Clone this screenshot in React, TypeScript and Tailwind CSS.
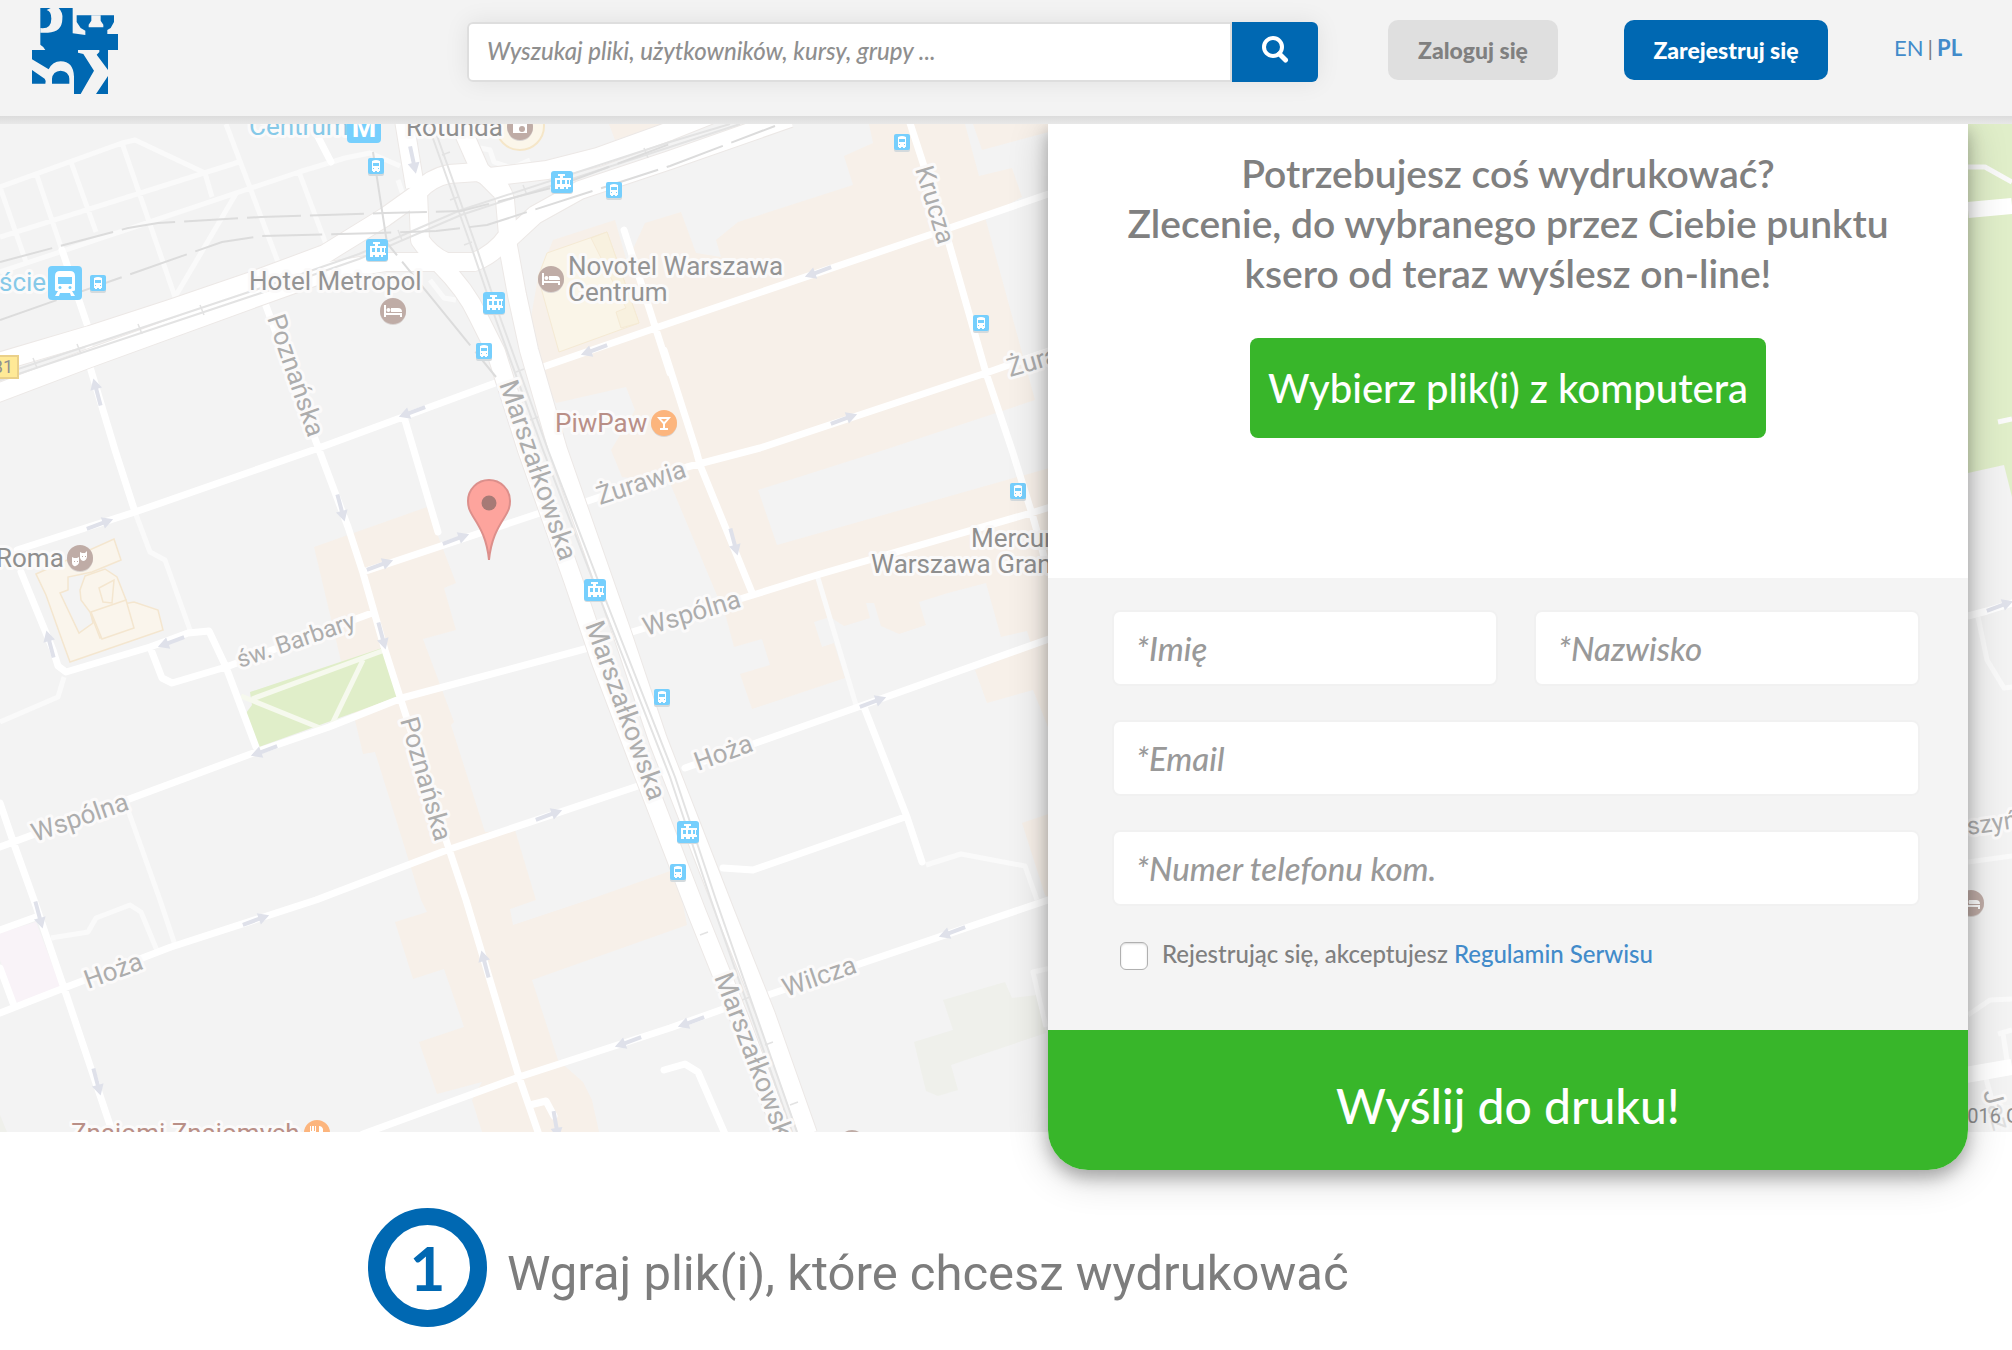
import type { ReactNode } from "react";

const MINOR_ROADS = [
  "M17 550 135 512 316 449 498 382",
  "M540 368 670 323 935 233 1060 190",
  "M363 572 543 512M585 502 687 467 760 448 986 373 1060 347",
  "M265 303 318 447 348 527 363 573 385 650 400 697 447 843 466 900 519 1077 538 1132",
  "M404 417 438 532",
  "M62 250 88 327 90 367 115 450 135 512",
  "M21 572 53 650 58 666 66 672 150 647 188 633 209 631 226 667 256 747",
  "M150 647 162 678 172 683 226 667 372 613",
  "M0 847 256 752 329 727 402 698 592 647M632 632 753 595 817 575 1031 513 1060 504",
  "M0 1013 64 988 171 947 316 900 447 850 641 785M685 768 858 707 1060 635",
  "M363 1134 519 1077 670 1028 726 1008M768 995 1060 896",
  "M0 803 15 847 34 900 64 988 113 1134",
  "M0 930 36 917M0 968 13 1003",
  "M909 120 948 240 986 373 1012 450 1033 517 1045 560",
  "M664 350 696 450 700 465 753 595",
  "M624 230 670 373",
  "M864 707 907 817 922 862M905 817 753 870 723 868",
  "M664 1070 685 1064 698 1072 725 1134",
  "M316 133 331 162",
  "M530 1105 546 1101 554 1116",
  "M1968 616 1987 611 2012 603",
];

const FAINT_ROADS = [
  "M0 187 122 143 135 140 205 173 212 197M0 237 239 162M0 272 299 172 345 158 370 153 400 166",
  "M0 187 26 262M36 173 62 250M71 162 96 232M122 143 175 297 237 192M226 124 278 262M299 172 327 247",
  "M135 512 150 552 165 560 190 630M64 677 58 697 0 722",
  "M128 810 160 900 175 945M51 938 88 932 96 918 130 905 141 912 158 953",
  "M926 865 961 854 1025 866 1037 900M1060 966 1033 972 1046 1027",
  "M817 575 856 705",
  "M398 180 402 192 410 196M480 148 490 150 494 162 512 168 530 160M430 280 444 298 456 300",
  "M1978 617 1987 660 2004 688 2012 687M1968 862 2012 856M1968 1015 1990 1000 2012 999",
  "M1968 167 1985 167 2012 182M1998 422 2012 419M1985 1075 1992 1100M1998 1034 2012 1030M2003 1034 2007 1060",
];

const COMMERCIAL = [
  "M869 124 965 124 979 176 1012 168 1022 197 985 217 1035 400 884 450 758 490 777 545 1060 465 1060 660 1033 650 1027 631 1001 637 986 583 948 593 919 602 926 625 899 634 881 626 874 603 866 603 870 618 844 626 830 617 814 622 822 647 834 643 845 678 752 709 740 674 770 665 762 639 734 647 726 617 670 483 622 477 611 450 635 410 626 387 556 403 538 367 528 335 538 277 553 240 615 220 627 262 645 223 681 212 696 253 721 257 716 240 738 222 853 185 844 156 873 143Z",
  "M975 670 1060 635 1060 740 1048 727 1033 690 987 703Z",
  "M1022 823 1060 810 1060 905 1045 895Z",
  "M973 124 1060 124 1060 129 982 150Z",
  "M609 124 665 124 615 140Z",
  "M314 547 427 507 456 583 444 588 456 630 423 639 454 722 451 725 485 832 515 830 536 900 510 909 513 925 588 900 676 869 687 925 532 980 558 1060 583 1082 592 1100 599 1132 482 1132 472 1100 482 1082 437 1094 419 1042 464 1027 444 969 413 979 395 922 427 912 421 900 375 752 363 754Z",
];

// x, y, heading in degrees
const ARROWS = [
  [413, 160, 78], [594, 350, 160], [412, 412, 160], [97, 392, -105], [818, 272, 160], [844, 419, -20],
  [100, 524, -20], [341, 508, 75], [380, 565, -20], [456, 539, -20], [171, 642, 160], [50, 644, -105],
  [382, 636, 75], [264, 751, 160], [549, 815, -20], [734, 542, 75], [873, 702, -20], [39, 915, 75],
  [256, 920, -20], [485, 964, -105], [628, 1042, 160], [97, 1082, 75], [556, 1125, 80], [952, 932, 160],
  [691, 1022, 160], [2000, 606, -20],
];

const BUS_STOPS = [
  [376, 166], [614, 190], [98, 283], [484, 351], [902, 142], [981, 323], [1018, 491], [662, 697], [678, 872],
];

const TRAM_STOPS = [[562, 182], [377, 250], [494, 303], [595, 590], [688, 832]];

const STREETS = [
  { name: "Krucza", x: 915, y: 169, angle: 73, size: 26 },
  { name: "Poznańska", x: 267, y: 318, angle: 71, size: 26 },
  { name: "Poznańska", x: 400, y: 720, angle: 74, size: 26 },
  { name: "Marszałkowska", x: 499, y: 384, angle: 71, size: 27 },
  { name: "Marszałkowska", x: 585, y: 625, angle: 70, size: 27 },
  { name: "Marszałkowska", x: 714, y: 977, angle: 69, size: 27 },
  { name: "Żurawia", x: 600, y: 505, angle: -18, size: 26 },
  { name: "Żurawia", x: 1010, y: 377, angle: -16, size: 26 },
  { name: "Wspólna", x: 646, y: 636, angle: -17, size: 26 },
  { name: "Wspólna", x: 35, y: 842, angle: -19, size: 26 },
  { name: "św. Barbary", x: 240, y: 668, angle: -19, size: 24 },
  { name: "Hoża", x: 698, y: 771, angle: -20, size: 26 },
  { name: "Hoża", x: 88, y: 989, angle: -20, size: 26 },
  { name: "Wilcza", x: 786, y: 997, angle: -19, size: 26 },
  { name: "szyń", x: 1968, y: 835, angle: -8, size: 25 },
  { name: "Jaz", x: 1983, y: 1092, angle: 75, size: 26 },
];

const PLACES = [
  { name: "Centrum", x: 249, y: 135, color: "#86c9e8" },
  { name: "Rotunda", x: 406, y: 136, color: "#8f8f8f" },
  { name: "Hotel Metropol", x: 249, y: 290, color: "#949494" },
  { name: "Novotel Warszawa", x: 568, y: 275, color: "#949494" },
  { name: "Centrum", x: 568, y: 301, color: "#949494" },
  { name: "PiwPaw", x: 555, y: 432, color: "#b98f87" },
  { name: "Roma", x: -4, y: 567, color: "#8f8f8f" },
  { name: "Mercur", x: 971, y: 547, color: "#8f8f8f" },
  { name: "Warszawa Gran", x: 871, y: 573, color: "#8f8f8f" },
  { name: "Znajomi Znajomych", x: 71, y: 1142, color: "#b98f87" },
  { name: "ście", x: -1, y: 291, color: "#86c9e8" },
];

function Poi({ x, y, color = "#bfaca6", children }: { x: number; y: number; color?: string; children?: ReactNode }) {
  return (
    <g transform={`translate(${x} ${y})`}>
      <circle cy="1" r="13" fill="#d9d4d2" />
      <circle r="13" fill={color} />
      {children}
    </g>
  );
}

function Bed() {
  return <path d="M-9-6h2v8H9V6H7V4H-7v2h-2zM-2-3H5q4 0 4 4H-2zM-4.500-3a2 2 0 1 1-.1 0z" fill="#fff" />;
}

function CityMap() {
  return (
    <svg
      className="absolute inset-0 size-full font-[Roboto,sans-serif]"
      viewBox="0 124 2012 1008"
      preserveAspectRatio="xMidYMid slice"
      role="img"
      aria-label="Mapa"
    >
      <rect y="124" width="2012" height="1008" fill="#f3f3f3" />
      <path d={COMMERCIAL.join("")} fill="#f7f0e9" />
      <path d="M547 253 607 232 639 323 559 352 538 277Z" fill="#faf5e8" stroke="#f5ead4" strokeWidth="1" />
      <path d="M591 238 607 232 639 323 621 328 616 312 626 308Z" fill="#f8f1df" stroke="#f5ead4" />
      <circle cx="520" cy="126" r="24" fill="#fbf6ea" stroke="#f5e6c8" strokeWidth="2" />
      <path d="M250 692 382 648 397 697 259 747 246 713 252 705Z" fill="#e0eec9" />
      <path d="M0 933 36 922 62 990 15 1003 0 960Z" fill="#f9f3f8" />
      <path
        d="M943 1000 1005 982 1012 998 1037 995 1046 1033 951 1065 958 1090 938 1096 926 1091 914 1042 953 1030Z"
        fill="#eff0eb"
      />
      <path d="M0 1115 7 1132 0 1132Z" fill="#eff0eb" />
      <path d="M1968 124H2012V497L2004 465 1968 473Z" fill="#e0eec9" />

      {/* opera building */}
      <g fill="#faf5ec" stroke="#f4e6cf" strokeWidth="1.500">
        <path d="M36 574 114 539 121 560 92 572 68 577 68 590 60 593 79 633 93 623 90 610 134 602 158 610 163 630 70 662 62 640 46 595Z" />
        <path d="M85 576 105 569 117 577 126 600 130 625 100 638 90 612 81 600 80 590Z" />
        <path d="M99 588 114 580 112 603 103 602ZM91 612 126 600 134 628 102 639Z" />
      </g>

      <g fill="none" stroke="#fafafa" strokeWidth="5" strokeLinejoin="round">
        <path d={FAINT_ROADS.join("")} />
        <path d="M252 699 382 651M241 696 320 728M363 660 332 724" stroke="#f6f9ee" />
      </g>
      <path d={MINOR_ROADS.join("")} fill="none" stroke="#fff" strokeWidth="7" strokeLinejoin="round" strokeLinecap="round" />
      <path d="M1968 210 2012 206M1960 1076 2012 1067" stroke="#fff" strokeWidth="16" />

      {/* avenues and the roundabout: casing first, then the white surface */}
      {["#ece8e6", "#fff"].map((color, i) => (
        <g key={color} fill="none" stroke={color} strokeWidth={i ? 18 : 20} strokeLinejoin="round">
          <path d="M-5 363 90 335 170 309 252 281 325 254 385 217 420 192" />
          <path d="M-5 394 90 358 263 295 330 271 385 262 440 262" />
          <path d="M404 120 415 187M458 120 480 170 500 190" />
          <path d="M490 177 547 170 598 157 670 131 710 115M508 240 535 215 580 190 670 160 790 118" />
          <path d="M418 192Q430 178 449 174L478 172Q500 180 505 200L508 235Q495 254 474 262L446 262Q430 255 420 240Z" />
          <path d="M440 264Q466 290 478 316L496 352 527 450 573 580 601 662 640 765 697 913 740 1020 783 1134" />
          <path d="M506 235 517 295 529 350 558 450 622 633 658 740 725 912 766 1015 808 1134" />
        </g>
      ))}

      {/* tram tracks */}
      <g fill="none" stroke="#e3e3e3" strokeWidth="2">
        <path d="M0 375 261 288 359 254 461 210 670 142 730 124M0 380 261 293 359 259 461 215 670 147 740 124" />
        <path d="M430 130 470 243 496 320 543 450 594 583 670 777 711 900 792 1132M435 130 475 243 501 320 548 450 599 583 675 777 716 900 797 1132" />
        <path d="M33 358 37 368M77 344 81 354M138 324 142 334M200 305 204 315M398 230 402 240M523 185 527 195M644 148 648 158M442 155 450 152M450 200 458 197M464 245 472 242M516 372 524 369M530 420 538 417M700 935 708 932M742 1000 750 997M765 1045 773 1042M790 1105 798 1102" strokeWidth="1.500" />
      </g>
      <g fill="none" stroke="#dcdcdc" strokeWidth="2">
        <path d="M0 262 128 228 158 223 261 217 385 213 461 211 555 187 670 144" strokeDasharray="54 9" />
        <path d="M0 320 222 242 261 236 380 233 436 231 487 225 670 166 775 126" strokeDasharray="60 9" />
        <path d="M373 152 387 243 496 377" strokeDasharray="108 8" />
      </g>

      <g fill="#dfe1ea">
        {ARROWS.map(([x, y, angle]) => (
          <path key={`${x}-${y}`} d="M-14-2H3V-6L14 0 3 6V2H-14Z" transform={`translate(${x} ${y}) rotate(${angle})`} />
        ))}
      </g>

      <rect x="-12" y="356" width="30" height="22" fill="#ffe996" stroke="#ead08a" strokeWidth="2" />
      <text x="13" y="373" textAnchor="end" fontSize="18" fill="#8f8f8f">81</text>

      <g fontSize="26" stroke="#fbfafa" strokeWidth="6" strokeLinejoin="round" className="[paint-order:stroke]">
        {STREETS.map((s) => (
          <text
            key={`${s.x}-${s.y}`}
            fill="#adadad"
            fontSize={s.size}
            transform={`translate(${s.x} ${s.y}) rotate(${s.angle})`}
          >
            {s.name}
          </text>
        ))}
        {PLACES.map((p) => (
          <text key={`${p.x}-${p.y}`} x={p.x} y={p.y} fill={p.color}>
            {p.name}
          </text>
        ))}
      </g>
      <rect x="1900" y="1105" width="112" height="27" fill="#f5f5f5" fillOpacity="0.700" />
      <text x="1956" y="1123" fontSize="20" fill="#8f8f8f">2016 G</text>

      {BUS_STOPS.map(([x, y]) => (
        <g key={`${x}-${y}`} transform={`translate(${x} ${y})`}>
          <rect x="-8" y="-7" width="16" height="17" rx="2" fill="#d4dadd" />
          <rect x="-8" y="-8" width="16" height="16" rx="2" fill="#76cffd" />
          <path d="M-4-5q4-2 8 0V5H3V6H1V5h-2v1h-2V5h-1z" fill="#fff" />
          <path d="M-3-3h6v3h-6zM-3 2h1v1h-1zM2 2h1v1h-1z" fill="#76cffd" />
        </g>
      ))}
      {TRAM_STOPS.map(([x, y]) => (
        <g key={`${x}-${y}`} transform={`translate(${x} ${y})`}>
          <rect x="-11" y="-10" width="22" height="22" rx="3" fill="#d4dadd" />
          <rect x="-11" y="-11" width="22" height="22" rx="3" fill="#76cffd" />
          <path d="M-4-8h7v2H1v2h8v2H8v5h1v2H-4v2h-3V-4h5v-2h-2zM-2 5h4v2h-4zM4 5h2v2H4z" fill="#fff" />
          <path d="M-5-2h3v4h-3zM0-2h3v4H0zM5-2h2v4H5z" fill="#76cffd" />
        </g>
      ))}

      <g transform="translate(65 283)">
        <rect x="-17" y="-17" width="34" height="34" rx="4" fill="#76cffd" />
        <path d="M-5-12H5q5 0 5 5V7Q10 8 8 8H7l3 5H6L5 10H-5l-1 3h-4l3-5h-1q-2 0-2-1V-7q0-5 5-5z" fill="#fff" />
        <path d="M-7-6H7V1H-7z" fill="#76cffd" />
        <circle cx="-5" cy="4.500" r="1.500" fill="#76cffd" />
        <circle cx="5" cy="4.500" r="1.500" fill="#76cffd" />
      </g>
      <rect x="347" y="109" width="34" height="34" rx="4" fill="#76cffd" />
      <text x="364" y="137" textAnchor="middle" fontSize="28" fontWeight="700" fill="#fff">M</text>

      <Poi x={520} y={127}>
        <path d="M-7-4h3v-2h4v2h7v10H-7z" fill="#fff" />
        <circle cx="2" cy="2" r="3" fill="#bfaca6" />
      </Poi>
      <Poi x={393} y={311}><Bed /></Poi>
      <Poi x={551} y={279}><Bed /></Poi>
      <Poi x={1971} y={903}><Bed /></Poi>
      <Poi x={852} y={1143} />
      <Poi x={664} y={423} color="#fcb57d">
        <path d="M-7-6H7L1 1V5H4V7H-4V5h3V1z" fill="#fff" />
        <path d="M-3-4H3L0-1z" fill="#fcb57d" />
      </Poi>
      <Poi x={80} y={558}>
        <path d="M-8-1 -6 0h3l2-1v6q-2 4-5 3-2-1-2-3zM0-6l2 1h3l2-2v6q-1 4-4 4-2 0-3-3z" fill="#fff" />
        <path d="M-6 3h1v1h-1zM-3 3h1v1h-1zM2-2h1v1H2zM5-2h1v1H5z" fill="#bfaca6" />
      </Poi>
      <Poi x={317} y={1133} color="#fcb57d">
        <path d="M-7-7v6q0 2 2 2v6h2V1q2 0 2-2v-6h-1v5h-1v-5h-2v5h-1v-5zM2-7v14h2V1h2v-5q-1-3-4-3z" fill="#fff" />
      </Poi>

      <path
        d="M489 560C487 540 481 529 474 518 469 510 468 507 468 501A21 21 0 0 1 510 501C510 507 509 510 504 518 497 529 491 540 489 560Z"
        fill="#fda49d"
        stroke="#dc8f8b"
        strokeWidth="2"
      />
      <circle cx="489" cy="503" r="7.500" fill="#a67a76" />
    </svg>
  );
}

function Logo() {
  return (
    <svg viewBox="36 24 258 258" className="size-[86px]" aria-hidden="true">
      <path
        fill="#0068b2"
        d="M61 24H158V100L196 105V92L182 84 170 66V46H282V66L272 84 262 90V102H294V150H264V282H162V230Q160 184 122 184 98 184 86 208L36 178V150H76Q74 142 61 134Z"
      />
      <path fill="#0068b2" d="M36 210 74 236Q80 244 76 251H36ZM96 251V236Q98 214 122 212 146 214 148 236V251Z" />
      <path
        fill="#f3f3f3"
        d="M92 24H116Q130 38 127 58 126 96 84 98H61V84Q94 88 94 56 94 34 80 30ZM214 46H242V62L250 74V82H206V74L214 62ZM174 150H238V156L230 164 264 210V228L228 282H182L222 212 190 162 174 158Z"
      />
    </svg>
  );
}

function Header() {
  return (
    <header className="relative z-10">
      <div className="flex h-[116px] items-start bg-[#f3f3f3] pr-12 pl-8">
        <a href="#" aria-label="Strona główna" className="mt-2 shrink-0">
          <Logo />
        </a>
        <form className="mt-[22px] ml-[349px] flex h-[60px] flex-1 rounded-md shadow-[0_0_24px_rgba(0,0,0,0.08)]">
          <input
            type="search"
            aria-label="Szukaj"
            placeholder="Wyszukaj pliki, użytkowników, kursy, grupy ..."
            className="h-full min-w-0 flex-1 rounded-l-md border-2 border-[#dedede] bg-white px-[18px] pb-[3px] text-[24px] font-medium italic outline-none placeholder:text-[#8f8f8f]"
          />
          <button type="submit" aria-label="Szukaj" className="flex w-[86px] items-center justify-center rounded-r-md bg-[#0068b2] pb-1">
            <svg viewBox="0 0 28 28" className="size-7" fill="none" stroke="#fff" strokeWidth="4">
              <circle cx="12" cy="11" r="9" />
              <path d="M18.500 18 24.500 24" strokeWidth="5" strokeLinecap="round" />
            </svg>
          </button>
        </form>
        <button type="button" className="mt-5 ml-[70px] h-[60px] w-[170px] rounded-[10px] bg-[#dfdfdf] text-[23px] font-black text-[#808080]">
          Zaloguj się
        </button>
        <button type="button" className="mt-5 ml-[66px] h-[60px] w-[204px] rounded-[10px] bg-[#0068b2] text-[23px] font-black text-white">
          Zarejestruj się
        </button>
        <nav aria-label="Język" className="mt-[34px] ml-[66px] flex w-[70px] gap-1 text-[22px] leading-7 whitespace-nowrap text-[#808080]">
          <a href="#en" className="text-[#428bca]">EN</a>|<a href="#pl" className="font-bold text-[#428bca]">PL</a>
        </nav>
      </div>
      <div className="h-2 bg-linear-to-b from-[#dcdcdc] to-[#e8e8e8]" />
    </header>
  );
}

function Field({ label, type = "text" }: { label: string; type?: string }) {
  return (
    <input
      type={type}
      aria-label={label}
      placeholder={`*${label}`}
      className="h-[76px] w-full min-w-0 rounded-lg border-2 border-[#f1f1f1] bg-white px-[22px] text-[33px] font-medium italic outline-none placeholder:text-[#999999]"
    />
  );
}

function PrintForm() {
  return (
    <form className="relative -mb-[38px] w-[920px] overflow-hidden rounded-b-[40px] bg-white shadow-[0_8px_16px_rgba(0,0,0,0.25),0_6px_40px_rgba(0,0,0,0.2)]">
      <div className="flex h-[454px] flex-col items-center pt-6 text-center">
        <h1 className="text-[39px] leading-[50px] font-semibold whitespace-nowrap text-[#808080]">
          Potrzebujesz coś wydrukować?
          <br />
          Zlecenie, do wybranego przez Ciebie punktu
          <br />
          ksero od teraz wyślesz on-line!
        </h1>
        <button type="button" className="mt-10 h-[100px] w-[516px] rounded-lg bg-[#38b62a] text-[40px] font-medium text-white">
          Wybierz plik(i) z komputera
        </button>
      </div>
      <div className="h-[452px] bg-[#f4f4f4] pt-8 pr-12 pl-16">
        <div className="grid grid-cols-2 gap-x-9 gap-y-[34px]">
          <Field label="Imię" />
          <Field label="Nazwisko" />
          <div className="col-span-2">
            <Field label="Email" type="email" />
          </div>
          <div className="col-span-2">
            <Field label="Numer telefonu kom." type="tel" />
          </div>
        </div>
        <div className="mt-[30px] flex items-center gap-[14px] pl-2 text-[24px] leading-9 font-medium text-[#808080]">
          <input
            id="terms"
            type="checkbox"
            className="mt-1 size-7 appearance-none rounded-md border border-[#b0b0b0] bg-white shadow-[inset_0_1px_2px_rgba(0,0,0,0.15)]"
          />
          <label htmlFor="terms">
            Rejestrując się, akceptujesz <a href="#regulamin" className="text-[#428bca]">Regulamin Serwisu</a>
          </label>
        </div>
      </div>
      <button type="submit" className="block h-[140px] w-full bg-[#38b62a] pt-3 text-[48px] font-medium text-white">
        Wyślij do druku!
      </button>
    </form>
  );
}

export default function App() {
  return (
    <div className="min-h-screen bg-white font-[Lato,sans-serif]">
      <Header />
      <main>
        <section className="relative flex justify-end pr-11">
          <CityMap />
          <PrintForm />
        </section>
        <section className="flex items-center gap-5 pt-[76px] pb-5 pl-[368px]">
          <div className="flex size-[119px] shrink-0 items-center justify-center rounded-full border-[17px] border-[#0068b2] text-[62px] font-bold text-[#0068b2]">
            1
          </div>
          <h2 className="pt-3 font-[Roboto,sans-serif] text-[49px] text-[#7d7d7d]">
            Wgraj plik(i), które chcesz wydrukować
          </h2>
        </section>
      </main>
    </div>
  );
}
